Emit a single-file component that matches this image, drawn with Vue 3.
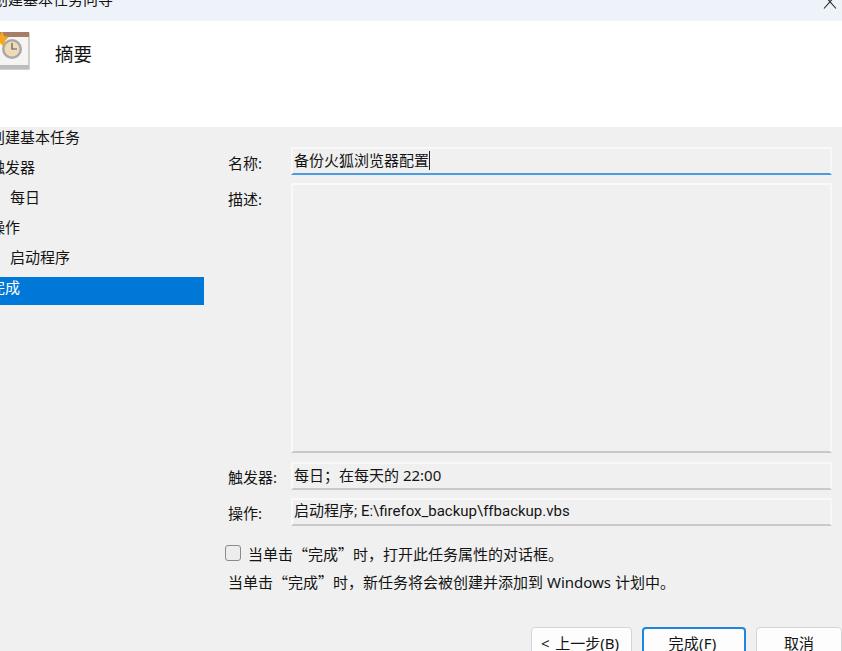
<script setup>
const steps = [
  { label: '创建基本任务', sub: false, active: false },
  { label: '触发器', sub: false, active: false },
  { label: '每日', sub: true, active: false },
  { label: '操作', sub: false, active: false },
  { label: '启动程序', sub: true, active: false },
  { label: '完成', sub: false, active: true },
]
</script>

<template>
  <div class="window">
    <div class="titlebar">
      <span class="title">创建基本任务向导</span>
      <svg class="close" width="14" height="10" viewBox="0 0 14 10">
        <path d="M1 -5 L13 8.5 M13 -5 L1 8.5" stroke="#222" stroke-width="1.1" fill="none" />
      </svg>
    </div>
    <div class="header">
      <svg class="logo" width="30" height="38" viewBox="0 0 30 38">
        <rect x="-6" y="1" width="35" height="36" fill="#f6f4f1" stroke="#a9a5a0" stroke-width="1" />
        <rect x="-6" y="0" width="35" height="5" fill="#a87d68" />
        <rect x="-6" y="33" width="35" height="4" fill="#bcbcbc" />
        <circle cx="12" cy="17" r="10" fill="#a6a9ad" />
        <circle cx="12" cy="17" r="7.5" fill="#f0dcb4" />
        <path d="M12 11 V17 H17" stroke="#4a5a70" stroke-width="1.2" fill="none" />
        <path d="M2 -2 L4 4 L9 5 L5 9 L4 15 L0 11 L-4 10 L-1 5 Z" fill="#f5a623" />
      </svg>
      <span class="heading">摘要</span>
    </div>
    <div class="body">
      <nav class="steps">
        <div
          v-for="s in steps"
          :key="s.label"
          class="step"
          :class="{ sub: s.sub, active: s.active }"
        >{{ s.label }}</div>
      </nav>
      <div class="main">
        <div class="row name-row">
          <label class="lbl">名称:</label>
          <div class="field name">备份火狐浏览器配置<i class="caret"></i></div>
        </div>
        <div class="row desc-row">
          <label class="lbl">描述:</label>
          <div class="field desc"></div>
        </div>
        <div class="row info-row trigger">
          <label class="lbl">触发器:</label>
          <div class="field info">每日；在每天的 22:00</div>
        </div>
        <div class="row info-row action">
          <label class="lbl">操作:</label>
          <div class="field info path">启动程序; E:\firefox_backup\ffbackup.vbs</div>
        </div>
        <div class="check-row">
          <span class="box"></span>
          <span>当单击<span class="cjk">“</span>完成<span class="cjk">”</span>时，打开此任务属性的对话框。</span>
        </div>
        <p class="note">当单击<span class="cjk">“</span>完成<span class="cjk">”</span>时，新任务将会被创建并添加到 Windows 计划中。</p>
        <div class="buttons">
          <button class="btn back">&lt; 上一步(B)</button>
          <button class="btn finish">完成(F)</button>
          <button class="btn cancel">取消</button>
        </div>
      </div>
    </div>
  </div>
</template>

<style>
html, body { margin: 0; padding: 0; overflow: hidden; }
</style>

<style scoped>
.window {
  width: 842px;
  height: 651px;
  overflow: hidden;
  background: #f0f0f0;
  color: #141414;
  font-family: "Noto Sans", "Noto Sans CJK SC", sans-serif;
  font-size: 15px;
  display: flex;
  flex-direction: column;
}
.cjk { font-family: "Noto Sans CJK SC", sans-serif; }
.titlebar {
  height: 21px;
  flex: none;
  background: #eef3f9;
  display: flex;
  justify-content: space-between;
  position: relative;
}
.title {
  margin: -12px 0 0 -7px;
  line-height: 22px;
  white-space: nowrap;
}
.close { margin-right: 5px; }
.header {
  height: 106px;
  flex: none;
  background: #fff;
  display: flex;
  align-items: flex-start;
}
.logo { margin-top: 11px; flex: none; }
.heading {
  margin: 20px 0 0 25px;
  font-size: 18.5px;
  line-height: 26px;
}
.body { flex: 1; display: flex; min-height: 0; }
.steps { width: 204px; flex: none; }
.step {
  height: 28px;
  margin-bottom: 2px;
  line-height: 21px;
  text-indent: -10px;
  white-space: nowrap;
}
.step.sub { text-indent: 10px; }
.step.active {
  background: #0078d7;
  color: #fff;
}
.main { flex: 1; min-width: 0; padding: 20px 10px 0 24px; }
.row { display: flex; }
.lbl { width: 63px; flex: none; line-height: 24px; font-size: 15px; }
.field {
  flex: 1;
  min-width: 0;
  box-sizing: border-box;
  background: #f0f0f0;
  border: 2px solid #f9f9f9;
  border-bottom: 2px solid #c9c9c9;
  border-right-color: #f7f7f7;
  padding-left: 1px;
  line-height: 22px;
  white-space: nowrap;
  font-size: 15px;
}
.name { height: 28px; border-bottom-color: #4a9be0; }
.name-row .lbl { margin-top: 4px; }
.caret {
  display: inline-block;
  width: 1px;
  height: 19px;
  background: #222;
  vertical-align: -4px;
}
.desc-row { margin-top: 8px; }
.desc-row .lbl { margin-top: 4px; }
.desc { height: 270px; }
.info-row .info { height: 28px; }
.path { font-family: Roboto, "Noto Sans CJK SC", sans-serif; }
.trigger { margin-top: 9px; }
.trigger .lbl { margin-top: 3px; }
.action { margin-top: 8px; }
.action .lbl { margin-top: 3px; }
.check-row {
  margin: 19px 0 0 -3px;
  display: flex;
  align-items: center;
  gap: 7px;
  height: 16px;
  font-size: 15px;
  white-space: nowrap;
}
.box {
  width: 16px;
  height: 16px;
  box-sizing: border-box;
  border: 1px solid #8a8a8a;
  border-radius: 3px;
  background: #ededed;
  flex: none;
}
.note {
  margin: 10px 0 0;
  line-height: 22px;
  font-size: 15px;
  white-space: nowrap;
}
.buttons {
  margin-top: 34px;
  display: flex;
  margin-left: 303px;
  gap: 10px;
  width: 400px;
}
.btn {
  height: 40px;
  box-sizing: border-box;
  background: #fdfdfd;
  border: 1px solid #d4d4d4;
  border-radius: 4px;
  font: inherit;
  font-size: 15px;
  color: inherit;
  padding: 0 0 10px;
  flex: none;
}
.back { width: 101px; word-spacing: 2px; padding-right: 3px; }
.finish { width: 104px; border: 2px solid #1f86dc; padding-right: 3px; letter-spacing: 0.2px; }
.cancel { width: 86px; }
</style>
